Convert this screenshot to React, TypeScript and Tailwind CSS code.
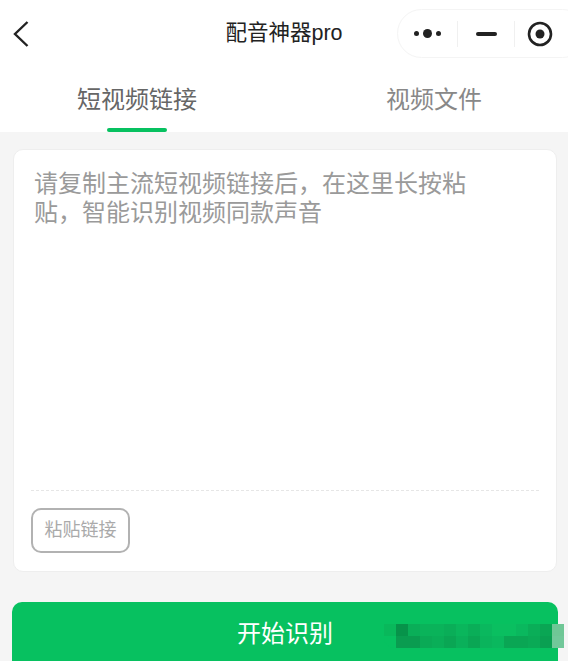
const font = "font-['Liberation_Sans','Noto_Sans_CJK_SC',sans-serif]"

// mosaic smudge over the button, [row1 colour, row2 colour]
const smudge: [string, string][] = [
  ['bg-[#09b85b]', 'bg-[#07c160]'],
  ['bg-[#07934a]', 'bg-[#0a9c50]'],
  ['bg-[#0aae58]', 'bg-[#0a9c50]'],
  ['bg-[#0ab35a]', 'bg-[#0aaa56]'],
  ['bg-[#0ab35a]', 'bg-[#0aae58]'],
  ['bg-[#0aae58]', 'bg-[#0aa654]'],
  ['bg-[#0ab65c]', 'bg-[#0ab05a]'],
  ['bg-[#0aae58]', 'bg-[#0aa654]'],
  ['bg-[#0ab85e]', 'bg-[#0ab45c]'],
  ['bg-[#0abf60]', 'bg-[#0ab85e]'],
  ['bg-[#0abf60]', 'bg-[#0aa654]'],
  ['bg-[#0ab85e]', 'bg-[#0aa654]'],
  ['bg-[#0aae58]', 'bg-[#0aaa56]'],
  ['bg-[#0aa654]', 'bg-[#0aa052]'],
  ['bg-[#6fc796]', 'bg-[#72c89a]'],
]

export default function App() {
  return (
    <div className={`${font} relative flex h-[661px] w-[568px] flex-col overflow-hidden bg-[#f5f5f5]`}>
      {/* Nav bar */}
      <div className="relative flex h-[66px] shrink-0 items-center justify-center bg-white">
        <button className="absolute left-[13px] top-[20px] text-[#222]">
          <svg width="16" height="28" viewBox="0 0 16 28" fill="none" stroke="currentColor" strokeWidth="2.4">
            <path d="M14.5 2 L2 14 L14.5 26" />
          </svg>
        </button>
        <h1 className="text-[21.5px] leading-6 text-[#222]">配音神器pro</h1>
        <div className="absolute left-[397px] top-[9px] flex h-[49px] w-[190px] items-center rounded-full border border-[#f4f4f4] bg-white">
          <div className="flex h-[26px] w-[60px] items-center justify-center gap-[4px] border-r border-[#f0f0f0]">
            <span className="h-[5px] w-[5px] rounded-full bg-[#222]" />
            <span className="h-[9px] w-[9px] rounded-full bg-[#222]" />
            <span className="h-[5px] w-[5px] rounded-full bg-[#222]" />
          </div>
          <div className="flex h-[26px] w-[57px] items-center justify-center border-r border-[#f0f0f0]">
            <span className="h-[4px] w-[21px] rounded-full bg-[#222]" />
          </div>
          <div className="flex w-[25px] items-center pl-[12px]">
            <svg className="shrink-0" width="26" height="26" viewBox="0 0 26 26" fill="none">
              <circle cx="13" cy="13" r="11" stroke="#222" strokeWidth="2.6" />
              <circle cx="13" cy="13" r="4.5" fill="#222" />
            </svg>
          </div>
        </div>
      </div>

      {/* Tabs */}
      <div className="flex h-[66px] shrink-0 bg-white">
        <div className="relative w-[274px] pl-[77px] pt-[19px] text-[24px] leading-[29px] text-[#666]">
          短视频链接
          <span className="absolute bottom-0 left-[107px] h-[4px] w-[60px] rounded-full bg-[#07c160]" />
        </div>
        <div className="pl-[112px] pt-[19px] text-[24px] leading-[29px] text-[#888]">视频文件</div>
      </div>

      {/* Input card */}
      <div className="mx-[13px] mt-[17px] flex h-[423px] w-[544px] shrink-0 flex-col rounded-[10px] border border-[#eeeeee] bg-white px-[17px]">
        <p className="mt-[19px] h-[321px] w-[440px] pl-[3px] text-[24px] leading-[29px] text-[#9a9a9a]">
          请复制主流短视频链接后，在这里长按粘贴，智能识别视频同款声音
        </p>
        <div className="border-t border-dashed border-[#e6e6e6]" />
        <button className="mt-[17px] flex h-[45px] w-[99px] items-center justify-center rounded-[10px] border-2 border-[#b2b2b2] text-[18px] text-[#aaa]">
          粘贴链接
        </button>
      </div>

      {/* Primary action */}
      <button className="relative mx-[12px] mt-[30px] h-[70px] w-[546px] shrink-0 rounded-[10px] bg-[#07c160] pb-[6px] text-[24px] text-white">
        开始识别
      </button>

      {/* Blurred-out watermark */}
      <div className="absolute left-[384px] top-[624px] flex h-[24px] overflow-hidden rounded-bl-[10px]">
        {smudge.map(([top, bottom], i) => (
          <div key={i} className="flex w-[12px] flex-col">
            <div className={`h-[12px] ${top}`} />
            <div className={`h-[12px] ${bottom}`} />
          </div>
        ))}
      </div>
    </div>
  )
}
